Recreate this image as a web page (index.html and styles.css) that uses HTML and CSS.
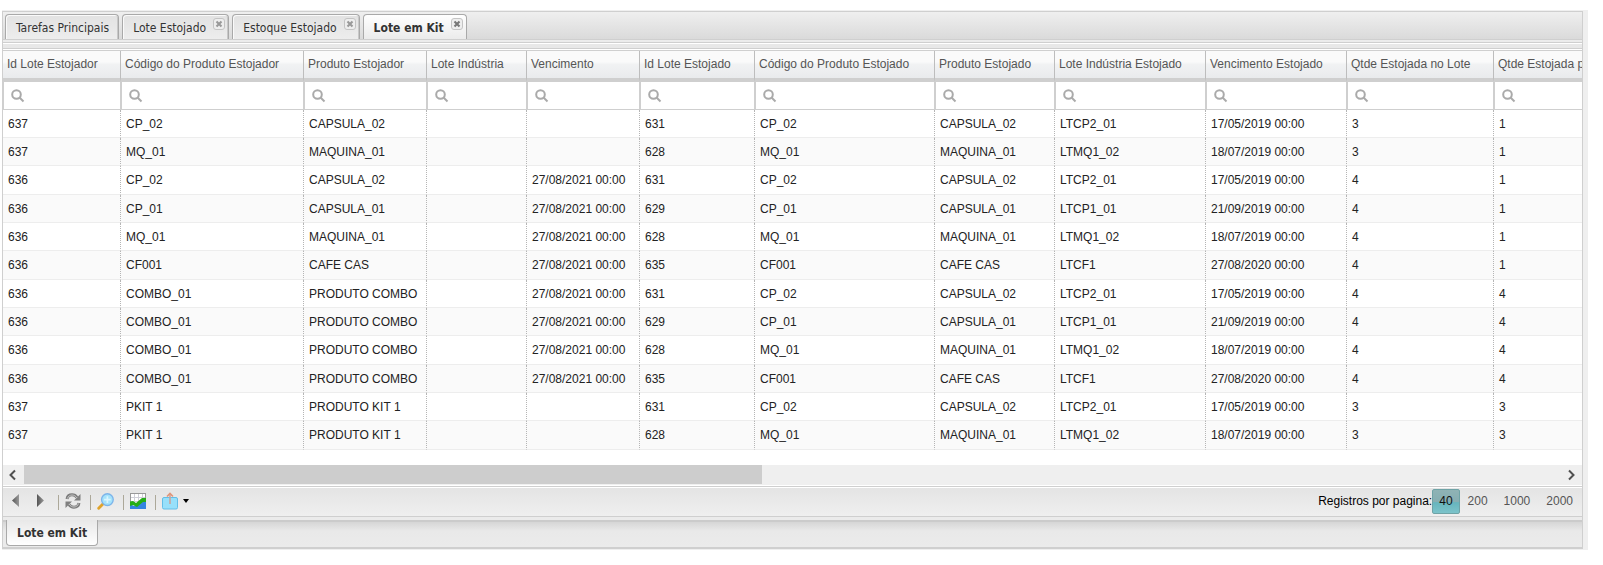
FILE: index.html
```html
<!DOCTYPE html>
<html lang="pt-BR">
<head>
    <meta charset="UTF-8">
    <meta name="viewport" content="width=device-width, initial-scale=1.0">
    <title>Lote em Kit</title>
    <link rel="stylesheet" href="styles.css">
</head>
<body>
    <div class="window">
        <div class="panel">
            <nav class="tabs">
                <div class="tab"><button class="tab-label">Tarefas Principais</button></div>
                <div class="tab"><button class="tab-label">Lote Estojado</button><button class="tab-close" aria-label="Fechar"><svg viewBox="0 0 12 12"><path d="M3 3l6 6M9 3l-6 6"/></svg></button></div>
                <div class="tab"><button class="tab-label">Estoque Estojado</button><button class="tab-close" aria-label="Fechar"><svg viewBox="0 0 12 12"><path d="M3 3l6 6M9 3l-6 6"/></svg></button></div>
                <div class="tab active"><button class="tab-label">Lote em Kit</button><button class="tab-close" aria-label="Fechar"><svg viewBox="0 0 12 12"><path d="M3 3l6 6M9 3l-6 6"/></svg></button></div>
            </nav>
            <div class="strip"></div>

            <div class="grid-view">
                <table class="grid">
                    <colgroup>
                        <col class="c118"><col class="c183"><col class="c123"><col class="c100">
                        <col class="c113"><col class="c115"><col class="c180"><col class="c120">
                        <col class="c151"><col class="c141"><col class="c147"><col class="c180">
                    </colgroup>
                    <thead>
                        <tr class="titles">
                            <th>Id Lote Estojador</th>
                            <th>Código do Produto Estojador</th>
                            <th>Produto Estojador</th>
                            <th>Lote Indústria</th>
                            <th>Vencimento</th>
                            <th>Id Lote Estojado</th>
                            <th>Código do Produto Estojado</th>
                            <th>Produto Estojado</th>
                            <th>Lote Indústria Estojado</th>
                            <th>Vencimento Estojado</th>
                            <th>Qtde Estojada no Lote</th>
                            <th>Qtde Estojada p</th>
                        </tr>
                        <tr class="filters" id="filters"></tr>
                    </thead>
                    <tbody id="rows"></tbody>
                </table>
            </div>

            <div class="scrollbar">
                <button class="scroll-arrow" aria-label="Rolar para a esquerda"><svg viewBox="0 0 20 20"><path d="M12 5.500l-4.500 4.500 4.500 4.500"/></svg></button>
                <div class="scroll-track"><div class="scroll-thumb"></div></div>
                <button class="scroll-arrow" aria-label="Rolar para a direita"><svg viewBox="0 0 20 20"><path d="M8 5.500l4.500 4.500-4.500 4.500"/></svg></button>
            </div>

            <div class="toolbar">
                <button class="tool" aria-label="Anterior"><svg width="16" height="16" viewBox="0 0 16 16"><defs><linearGradient id="arrow"><stop offset="0" stop-color="#555"/><stop offset="1" stop-color="#999"/></linearGradient></defs><path d="M11 1v13L4 7.500z" fill="url(#arrow)"/></svg></button>
                <button class="tool" aria-label="Próxima"><svg width="16" height="16" viewBox="0 0 16 16"><path d="M4 1v13l7-6.500z" fill="url(#arrow)"/></svg></button>
                <span class="separator"></span>
                <button class="tool" aria-label="Atualizar"><svg width="16" height="16" viewBox="0 0 16 16" fill="none"><path d="M2 6C2.500 3 4.500 1.800 7 1.800c2.200 0 3.800.8 5 2.700" stroke="#7c7c7c" stroke-width="3"/><path d="M15.500 1v6.500H9z" fill="#808080"/><path d="M14 10c-.5 3-2.500 4.200-5 4.200-2.200 0-3.800-.8-5-2.700" stroke="#7c7c7c" stroke-width="3"/><path d="M.5 15V8.500H7z" fill="#808080"/><path d="M2.500 5.500C3.200 3.200 5 2 7 2c2 0 3.700 1 5 3M13.500 10.500C12.800 12.800 11 14 9 14c-2 0-3.700-1-5-3" stroke="#c4c4c4"/></svg></button>
                <span class="separator"></span>
                <button class="tool" aria-label="Pesquisar"><svg width="17" height="17" viewBox="0 0 18 18"><path d="M1.800 16.200l5-5" stroke="#dfa32c" stroke-width="3" stroke-linecap="round"/><circle cx="11" cy="7" r="6.200" fill="#a5e3fb" stroke="#7cb4ea" stroke-width="1.400"/><path d="M11 3.500v7M7.500 7h7" stroke="#d9f5ff" stroke-width="1.800"/></svg></button>
                <span class="separator"></span>
                <button class="tool" aria-label="Gráfico"><svg width="16" height="16" viewBox="0 0 16 16"><rect x=".5" y=".5" width="15" height="15" fill="#fff" stroke="#999"/><path d="M4.500 1v9M8.500 1v9M12.500 1v9M1 4.500h14M1 8.500h14" stroke="#d0d0d8"/><path d="M0 11l4 2 5-2 7-4v9H0z" fill="#3484e0"/><path d="M0 8.500L3 8l3 2 6-5h4v4h-3l-6 5-4-2-3 1z" fill="#25ad16"/></svg></button>
                <span class="separator"></span>
                <button class="tool" aria-label="Exportar"><svg width="16" height="18" viewBox="0 0 16 18"><rect x=".5" y="5.500" width="15" height="11.500" rx="1.500" fill="#97e0fa" stroke="#62bee8"/><path d="M8 12V2" stroke="#c9a49c" stroke-width="1.600"/><path d="M5 4.500L8 1.500l3 3" fill="none" stroke="#e09478" stroke-width="1.600"/></svg><svg class="caret" width="6" height="4" viewBox="0 0 6 4"><path d="M0 0h6L3 4z"/></svg></button>

                <div class="pager">
                    <span>Registros por pagina:</span>
                    <button class="page-size selected">40</button>
                    <button class="page-size">200</button>
                    <button class="page-size">1000</button>
                    <button class="page-size">2000</button>
                </div>
            </div>

            <div class="bottom-tabs">
                <button class="bottom-tab">Lote em Kit</button>
            </div>
        </div>
    </div>

    <script>
        // Componentes de cada kit
        const capsula2 = ['CP_02', 'CAPSULA_02', 'LTCP2_01', '17/05/2019 00:00'];
        const capsula1 = ['CP_01', 'CAPSULA_01', 'LTCP1_01', '21/09/2019 00:00'];
        const maquina = ['MQ_01', 'MAQUINA_01', 'LTMQ1_02', '18/07/2019 00:00'];
        const cafe = ['CF001', 'CAFE CAS', 'LTCF1', '27/08/2020 00:00'];
        const venc = '27/08/2021 00:00';

        const rows = [
            ['637', 'CP_02', 'CAPSULA_02', '', '', '631', ...capsula2, '3', '1'],
            ['637', 'MQ_01', 'MAQUINA_01', '', '', '628', ...maquina, '3', '1'],
            ['636', 'CP_02', 'CAPSULA_02', '', venc, '631', ...capsula2, '4', '1'],
            ['636', 'CP_01', 'CAPSULA_01', '', venc, '629', ...capsula1, '4', '1'],
            ['636', 'MQ_01', 'MAQUINA_01', '', venc, '628', ...maquina, '4', '1'],
            ['636', 'CF001', 'CAFE CAS', '', venc, '635', ...cafe, '4', '1'],
            ['636', 'COMBO_01', 'PRODUTO COMBO', '', venc, '631', ...capsula2, '4', '4'],
            ['636', 'COMBO_01', 'PRODUTO COMBO', '', venc, '629', ...capsula1, '4', '4'],
            ['636', 'COMBO_01', 'PRODUTO COMBO', '', venc, '628', ...maquina, '4', '4'],
            ['636', 'COMBO_01', 'PRODUTO COMBO', '', venc, '635', ...cafe, '4', '4'],
            ['637', 'PKIT 1', 'PRODUTO KIT 1', '', '', '631', ...capsula2, '3', '3'],
            ['637', 'PKIT 1', 'PRODUTO KIT 1', '', '', '628', ...maquina, '3', '3']
        ];

        document.getElementById('rows').innerHTML = rows.map(row =>
            `<tr>${row.map(value => `<td>${value}</td>`).join('')}</tr>`
        ).join('');

        // Um campo de filtro por coluna
        const titles = document.querySelectorAll('.titles th');
        document.getElementById('filters').innerHTML = Array.from(titles).map(th => `
            <td><label class="filter">
                <svg width="14" height="14" viewBox="0 0 14 14"><circle cx="5.500" cy="5.500" r="4.300"/><path d="M8.500 8.500l4 4"/></svg>
                <input type="text" aria-label="${th.textContent}">
            </label></td>
        `).join('');
    </script>
</body>
</html>
```

FILE: styles.css
```css
* {
    margin: 0;
    padding: 0;
    box-sizing: border-box;
}

body {
    font-family: "Liberation Sans", Arial, sans-serif;
    font-size: 12px;
    color: #222;
    background-color: #fff;
    padding: 10px 15px 0 2px;
}

button {
    font: inherit;
    color: inherit;
    background: none;
    border: none;
    cursor: pointer;
}

.window {
    background-color: #efefef;
    padding: 1px 5px 1px 0;
}

.panel {
    border: 1px solid #cfcfcf;
    border-bottom-width: 2px;
    background-color: #fff;
}

/* Abas */
.tabs {
    display: flex;
    gap: 3px;
    height: 28px;
    padding: 2px 2px 0;
    background: linear-gradient(#efefef, #dadada);
    border-bottom: 1px solid #cfcfcf;
}

.tab {
    display: flex;
    align-items: flex-start;
    padding: 0 3px 0 10px;
    border: 1px solid #a9a9a9;
    border-bottom: none;
    border-radius: 4px 4px 0 0;
    background: linear-gradient(#e2e2e2, #ededed);
    box-shadow: inset 1px 1px #fafafa, inset -1px 0 #c8c8c8;
}

.tab:first-child {
    padding-right: 9px;
}

.tab-label {
    font-family: "DejaVu Sans Condensed", Tahoma, sans-serif;
    font-size: 12px;
    line-height: 26px;
    color: #333;
}

.tab-close {
    width: 12px;
    height: 12px;
    margin: 3px 0 0 7px;
    border: 1px solid #c4c4c4;
    border-radius: 3px;
    background-color: #eee;
}

.tab-close svg {
    display: block;
    stroke: #999;
    stroke-width: 2.5;
}

.tab.active {
    background: linear-gradient(#fff, #ebebeb);
    box-shadow: none;
}

.tab.active .tab-label {
    font-weight: bold;
}

.tab.active .tab-close svg {
    stroke: #777;
}

.strip {
    height: 10px;
    background: linear-gradient(#ececec 2px, #cfcfcf 2px 3px, #fff 3px 4px, #e8e8e8 4px 8px, #cfcfcf 8px 9px, #fff 9px);
}

/* Tabela */
.grid-view {
    overflow: hidden;
    padding-bottom: 15px;
    border-top: 1px solid #cfcfcf;
}

.grid {
    width: 1671px;
    table-layout: fixed;
    border-collapse: separate;
    border-spacing: 0;
}

.c100 { width: 100px; }
.c113 { width: 113px; }
.c115 { width: 115px; }
.c118 { width: 118px; }
.c120 { width: 120px; }
.c123 { width: 123px; }
.c141 { width: 141px; }
.c147 { width: 147px; }
.c151 { width: 151px; }
.c180 { width: 180px; }
.c183 { width: 183px; }

.titles th {
    height: 31px;
    padding: 0 0 1px 4px;
    font-weight: normal;
    text-align: left;
    white-space: nowrap;
    color: #555;
    background: linear-gradient(#fafafa 40%, #f1f2f3 50%, #e9ebed);
    border-right: 1px solid #bdbdbd;
    border-bottom: 4px solid #cfcfcf;
}

.filters td {
    height: 28px;
    border-bottom: 1px solid #cfcfcf;
    border-left: 1px solid #cfcfcf;
    border-right: 1px solid #cfcfcf;
}

.filter {
    display: flex;
    align-items: center;
    gap: 4px;
    padding: 1px 0 0 7px;
}

.filter svg {
    flex: none;
    fill: none;
    stroke: #aaa;
    stroke-width: 2;
}

.filter input {
    width: 100%;
    min-width: 0;
    height: 24px;
    border: none;
    outline: none;
    font: inherit;
    background: none;
}

.grid tbody td {
    height: 28px;
    padding: 0 0 0 5px;
    white-space: nowrap;
    border-right: 1px dotted #b5b5b5;
    border-bottom: 1px solid #ededed;
}

.grid tbody tr:nth-child(3n) td {
    height: 29px;
}

.grid tbody tr:nth-child(even) {
    background-color: #fafafa;
}

/* Barra de rolagem */
.scrollbar {
    display: flex;
    height: 20px;
    background-color: #efefef;
}

.scroll-arrow {
    width: 21px;
    height: 20px;
}

.scroll-arrow svg {
    display: block;
    width: 20px;
    height: 20px;
    fill: none;
    stroke: #505050;
    stroke-width: 2;
}

.scroll-track {
    flex: 1;
}

.scroll-thumb {
    width: 48%;
    height: 19px;
    background-color: #cdcdcd;
}

/* Rodapé */
.toolbar {
    display: flex;
    align-items: center;
    height: 31px;
    margin-top: 1px;
    padding: 1px 1px 2px 5px;
    border-top: 1px solid #cfcfcf;
    border-bottom: 1px solid #cfcfcf;
    background: linear-gradient(#fff 1px, #e4e4e4 1px, #efefef);
}

.tool {
    display: flex;
    align-items: center;
    margin-right: 9px;
}

.tool svg {
    display: block;
}

.tool .caret {
    margin-left: 5px;
}

.separator {
    width: 1px;
    height: 15px;
    margin: 2px 6px 0 0;
    background-color: #aca899;
}

.pager {
    display: flex;
    align-items: center;
    margin-left: auto;
    color: #000;
}

.page-size {
    height: 25px;
    padding: 0 7px;
    color: #555;
    border: 1px solid transparent;
    border-radius: 2px;
}

.page-size.selected {
    padding: 0 6px;
    color: #111;
    border-color: #6fa3a6;
    background: linear-gradient(#8fb3b5, #86aeb2 50%, #67b5bd 55%, #7cc3ca);
}

.bottom-tabs {
    height: 30px;
    padding: 3px 3px 0;
    background: linear-gradient(#ebebeb 3px, #cbcbcb 3px 5px, #d6d6d6 5px, #e9e9e9 14px, #ebebeb);
}

.bottom-tab {
    height: 26px;
    padding: 0 10px;
    font-family: "DejaVu Sans Condensed", Tahoma, sans-serif;
    font-weight: bold;
    color: #333;
    border: 1px solid #a9a9a9;
    border-top: none;
    border-radius: 0 0 4px 4px;
    background: linear-gradient(#e8e8e8, #fff);
}
```
